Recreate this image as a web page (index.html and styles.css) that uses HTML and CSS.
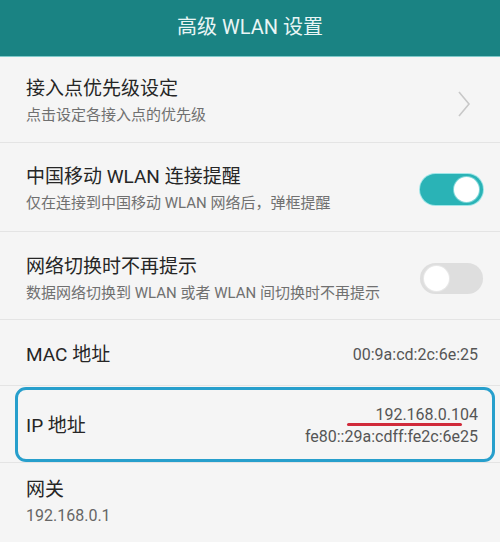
FILE: index.html
```html
<!DOCTYPE html>
<html lang="zh-CN">
<head>
<meta charset="utf-8">
<link rel="stylesheet" href="styles.css">
</head>
<body>
<div class="screen">
  <header class="topbar">高级 WLAN 设置</header>

  <div class="row row-nav">
    <div class="text">
      <div class="title">接入点优先级设定</div>
      <div class="sub">点击设定各接入点的优先级</div>
    </div>
    <svg class="chev" width="14" height="28" viewBox="0 0 14 28"><path d="M2 2 L12 14 L2 26" fill="none" stroke="#c8c8c8" stroke-width="1.6"/></svg>
  </div>

  <div class="row row-sw1">
    <div class="text">
      <div class="title">中国移动 WLAN 连接提醒</div>
      <div class="sub">仅在连接到中国移动 WLAN 网络后，弹框提醒</div>
    </div>
    <div class="switch on"><span class="knob"></span></div>
  </div>

  <div class="row row-sw2">
    <div class="text">
      <div class="title">网络切换时不再提示</div>
      <div class="sub">数据网络切换到 WLAN 或者 WLAN 间切换时不再提示</div>
    </div>
    <div class="switch off"><span class="knob"></span></div>
  </div>

  <div class="row row-mac">
    <div class="title">MAC 地址</div>
    <div class="value">00:9a:cd:2c:6e:25</div>
  </div>

  <div class="ip-wrap">
    <div class="ip-box">
      <div class="title">IP 地址</div>
      <div class="values">
        <div class="value v1">192.168.0.104<span class="mark"></span></div>
        <div class="value v2">fe80::29a:cdff:fe2c:6e25</div>
      </div>
    </div>
  </div>

  <div class="row row-gw">
    <div class="text">
      <div class="title">网关</div>
      <div class="sub num">192.168.0.1</div>
    </div>
  </div>
</div>
</body>
</html>
```

FILE: styles.css
```css
html, body {
  margin: 0;
  padding: 0;
  background: #f5f5f5;
}
.screen {
  width: 500px;
  height: 542px;
  overflow: hidden;
  background: #f5f5f5;
  font-family: Roboto, "Noto Sans CJK SC", sans-serif;
  color: #222;
}
.topbar {
  height: 57px;
  background: #1a8383;
  color: #e9f5f5;
  font-size: 20px;
  display: flex;
  align-items: center;
  justify-content: center;
  padding-bottom: 6px;
  box-sizing: border-box;
  border-bottom: 1px solid #7fcaca;
}
.row {
  display: flex;
  align-items: center;
  justify-content: space-between;
  padding: 0 17px 0 26px;
  box-sizing: border-box;
  border-bottom: 1px solid #e4e4e4;
}
.title {
  font-size: 19px;
  line-height: 26px;
  color: #262626;
}
.sub {
  font-size: 15px;
  line-height: 22px;
  color: #707070;
  margin-top: 2px;
}
.sub.num {
  font-size: 16px;
  color: #666;
}
.row-nav { height: 86px; padding-top: 2px; }
.row-sw1 { height: 89px; padding-top: 4px; }
.row-sw2 { height: 88px; padding-top: 6px; }
.row-mac { height: 66px; padding-top: 4px; padding-right: 22px; }
.chev { margin-right: 12px; margin-top: 6px; }
.switch {
  width: 63px;
  height: 31px;
  border-radius: 16px;
  position: relative;
  flex-shrink: 0;
}
.switch.on {
  background: #2ab3b6;
  box-shadow: 0 0 0 1px #9fe6e8;
}
.switch.off {
  background: #dedede;
}
.knob {
  position: absolute;
  top: 3px;
  width: 25px;
  height: 25px;
  border-radius: 50%;
  background: #fff;
}
.switch.on .knob { right: 4px; box-shadow: 0 0 0 1px #7fd6d8; }
.switch.off .knob { left: 4px; box-shadow: 0 0 0 1px #e8e8e8; }
.value {
  font-size: 16px;
  color: #555;
  font-family: Roboto, sans-serif;
}
.ip-wrap {
  padding: 1px 5px 0 15px;
  border-bottom: 1px solid #e4e4e4;
}
.ip-box {
  height: 75px;
  border: 3px solid #279fcc;
  border-radius: 11px;
  box-sizing: border-box;
  display: flex;
  align-items: center;
  justify-content: space-between;
  padding: 2px 14px 0 8px;
}
.values {
  text-align: right;
  margin-top: 1px;
}
.values .value {
  line-height: 22px;
}
.v1 {
  position: relative;
  display: inline-block;
}
.mark {
  position: absolute;
  left: -28px;
  right: 16px;
  bottom: 0px;
  height: 3px;
  border-radius: 2px;
  background: #d02a3a;
}
.row-gw {
  height: 79px;
  border-bottom: none;
  align-items: flex-start;
  padding-top: 14px;
}
```
